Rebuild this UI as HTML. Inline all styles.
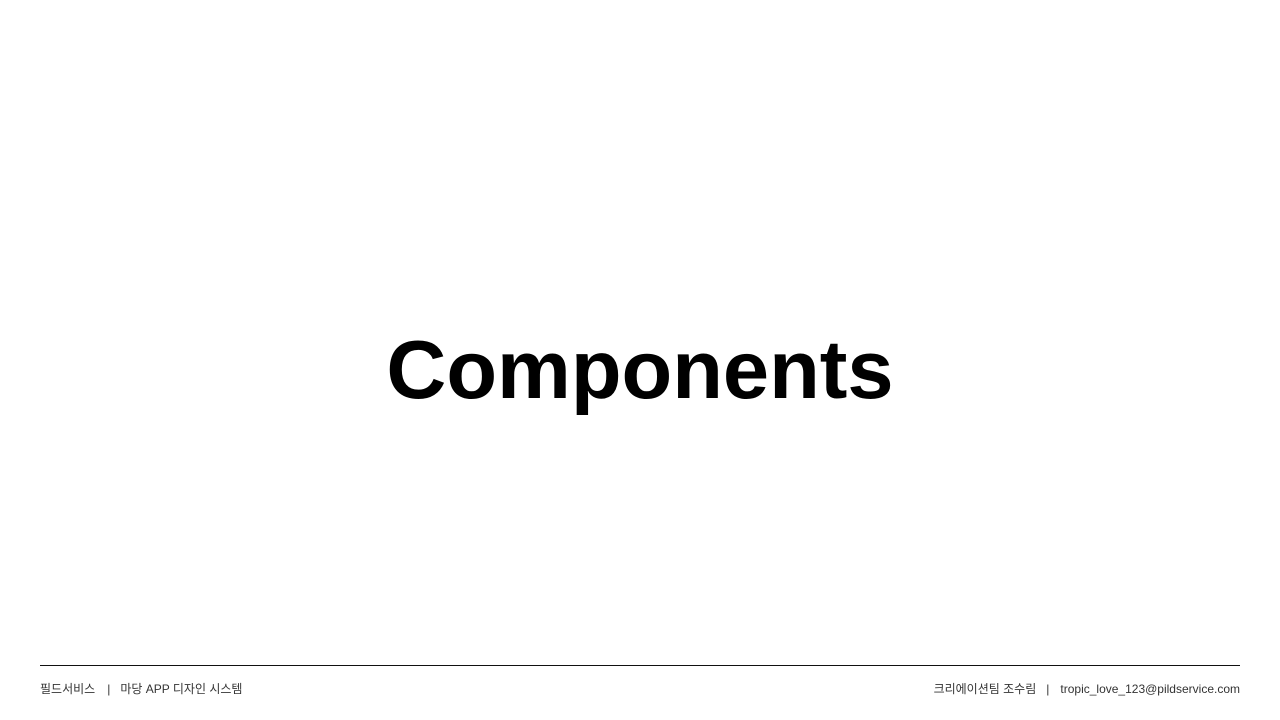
<!DOCTYPE html>
<html><head><meta charset="utf-8"><style>
html,body{margin:0;padding:0;background:#fff;}
body{width:1280px;height:720px;position:relative;overflow:hidden;font-family:"Liberation Sans","Noto Sans CJK KR",sans-serif;}
.title{position:absolute;left:0;width:1280px;top:320px;text-align:center;font-weight:bold;font-size:83px;line-height:100px;color:#000;}
.line{position:absolute;left:40px;width:1200px;top:665px;height:1px;background:#111;}
.f{position:absolute;top:681px;font-size:12px;line-height:16px;color:#333;white-space:pre;}
.s{display:inline-block;}
</style></head><body>
<div class="title">Components</div>
<div class="line"></div>
<div class="f" style="left:40px">필드서비스<span class="s" style="width:12px"></span>|<span class="s" style="width:10px"></span>마당 APP 디자인 시스템</div>
<div class="f" style="right:40px">크리에이션팀 조수림<span class="s" style="width:10px"></span>|<span class="s" style="width:11px"></span>tropic_love_123@pildservice.com</div>
</body></html>
